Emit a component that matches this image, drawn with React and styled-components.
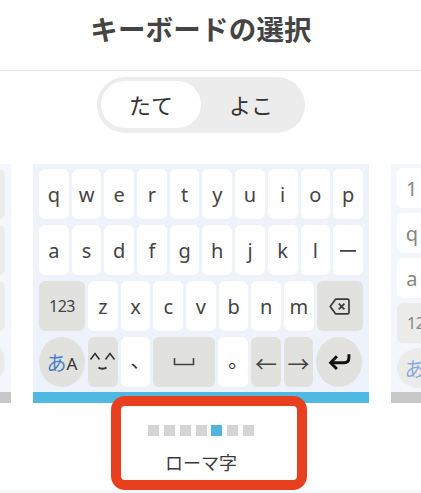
import React from "react";
import styled, { createGlobalStyle } from "styled-components";

const latinRows = ["qwertyuiop".split(""), "asdfghjkl".split("").concat("ー")];
const bottomLetters = "zxcvbnm".split("");
const pagerDots = [0, 1, 2, 3, 4, 5, 6];
const pagerActive = 4;
const numberRows = ["1", "q", "a"];

const SpaceIcon = () => (
  <svg width="22" height="10" viewBox="0 0 22 10" fill="none" stroke="#444" strokeWidth="1.6">
    <path d="M1.5 1v6.5h19V1" />
  </svg>
);

const FaceIcon = () => (
  <svg width="27" height="24" viewBox="0 0 27 24" fill="none" stroke="#333" strokeWidth="1.6">
    <path d="M1.5 9.5 6 3.5l4.5 6" />
    <path d="M16.5 9.5 21 3.5l4.5 6" />
    <path d="M9.5 17.5c2 1.6 6 1.6 8 0" strokeWidth="2" />
  </svg>
);

const BackspaceIcon = () => (
  <svg width="21" height="17" viewBox="0 0 21 17" fill="none" stroke="#3a3a3a" strokeWidth="1.7" strokeLinejoin="round">
    <path d="M6.5 1.2h12a1.5 1.5 0 0 1 1.5 1.5v11.6a1.5 1.5 0 0 1-1.5 1.5h-12L1.2 8.5z" />
    <path d="m9.8 5.6 5.6 5.8m0-5.8-5.6 5.8" />
  </svg>
);

const EnterIcon = () => (
  <svg width="23" height="18" viewBox="0 0 22 17" fill="none" stroke="#111" strokeWidth="2.8">
    <path d="M20 1v3.5c0 3-1.6 4.700-4.500 4.700H3" />
    <path d="M8.500 3 2.500 9.200l6 6" />
  </svg>
);

const App = () => {
  return (
    <Page>
      <GlobalStyle />
      <Header>
        <Title>キーボードの選択</Title>
      </Header>
      <ToggleRow>
        <Toggle>
          <ToggleOption $active>たて</ToggleOption>
          <ToggleOption>よこ</ToggleOption>
        </Toggle>
      </ToggleRow>
      <Track>
        <Panel>
          <Keys $faded>
            <Row $end>
              <Key $wide $tone="gray" />
            </Row>
            <Row $end>
              <Key $wide $tone="gray" />
            </Row>
            <Row $end>
              <Key $wide $tone="gray" />
            </Row>
            <Row $end>
              <Key $wide $round $tone="gray" />
            </Row>
          </Keys>
          <Bar $tone="gray" />
        </Panel>

        <Panel>
          <Keys>
            {latinRows.map((row) => (
              <Row key={row[0]}>
                {row.map((letter) => (
                  <Key key={letter}>{letter}</Key>
                ))}
              </Row>
            ))}
            <Row>
              <Key $wide $tone="gray" $small>
                123
              </Key>
              {bottomLetters.map((letter) => (
                <Key key={letter}>{letter}</Key>
              ))}
              <Key $wide $tone="gray">
                <BackspaceIcon />
              </Key>
            </Row>
            <Row>
              <Key $wide $round $tone="gray">
                <Kana>あ</Kana>
                <KanaLatin>A</KanaLatin>
              </Key>
              <Key $tone="gray">
                <FaceIcon />
              </Key>
              <Key>
                <Punct>、</Punct>
              </Key>
              <Key $tone="gray" $space>
                <SpaceIcon />
              </Key>
              <Key>
                <Punct>。</Punct>
              </Key>
              <Key $tone="gray">
                <Arrow>←</Arrow>
              </Key>
              <Key $tone="gray">
                <Arrow>→</Arrow>
              </Key>
              <Key $wide $round $tone="gray">
                <EnterIcon />
              </Key>
            </Row>
          </Keys>
          <Bar $tone="blue" />
        </Panel>

        <Panel>
          <Keys $faded $compact>
            {numberRows.map((letter) => (
              <Row key={letter}>
                <Key $short>{letter}</Key>
              </Row>
            ))}
            <Row>
              <Key $short $wide $tone="gray" $small>
                123
              </Key>
            </Row>
            <Row>
              <Key $short $wide $round $tone="gray">
                <Kana>あ</Kana>
                <KanaLatin>A</KanaLatin>
              </Key>
            </Row>
          </Keys>
          <Bar $tone="gray" />
        </Panel>
      </Track>
      <Pager>
        <Dots>
          {pagerDots.map((dot) => (
            <Dot key={dot} $active={dot === pagerActive} />
          ))}
        </Dots>
        <PagerLabel>ローマ字</PagerLabel>
        <Highlight />
      </Pager>
      <BottomEdge />
    </Page>
  );
};

export default App;

const GlobalStyle = createGlobalStyle`
  html, body {
    margin: 0;
    padding: 0;
    background: #fff;
    overflow: hidden;
  }
`;

const Page = styled.div`
  width: 421px;
  height: 493px;
  display: flex;
  flex-direction: column;
  overflow: hidden;
  font-family: "Noto Sans CJK JP", "Noto Sans", sans-serif;
  color: #3a3a3a;
`;

const Header = styled.div`
  height: 70px;
  flex-shrink: 0;
  display: flex;
  align-items: center;
  justify-content: center;
  padding-right: 19px;
  border-bottom: 1px solid #e9e9e9;
`;

const Title = styled.div`
  font-size: 27.500px;
  font-weight: 700;
  color: #444;
  letter-spacing: 0.2px;
  margin-top: -14px;
`;

const ToggleRow = styled.div`
  display: flex;
  justify-content: center;
  padding-right: 19px;
  margin-top: 6px;
`;

const Toggle = styled.div`
  width: 208px;
  height: 56px;
  box-sizing: border-box;
  padding: 4px 4px 5px;
  display: flex;
  border-radius: 28px;
  background: #ececec;
`;

const ToggleOption = styled.div`
  width: 100px;
  display: flex;
  align-items: center;
  justify-content: center;
  padding-bottom: 2px;
  border-radius: 24px;
  font-size: 22px;
  color: #333;
  background: ${(p) => (p.$active ? "#fff" : "transparent")};
`;

const Track = styled.div`
  display: flex;
  gap: 22px;
  flex-shrink: 0;
  margin: 31px 0 0 -325px;
`;

const Panel = styled.div`
  width: 336px;
  height: 239px;
  flex-shrink: 0;
  display: flex;
  flex-direction: column;
`;

const Keys = styled.div`
  flex: 1;
  box-sizing: border-box;
  display: flex;
  flex-direction: column;
  gap: ${(p) => (p.$compact ? "5px" : "6px")};
  padding: ${(p) => (p.$compact ? "4px 6px" : "5px 6px")};
  background: #eef2fa;
  opacity: ${(p) => (p.$faded ? 0.65 : 1)};
`;

const Row = styled.div`
  display: flex;
  gap: 3px;
  justify-content: ${(p) => (p.$end ? "flex-end" : "flex-start")};
`;

const keyWidth = (p) => {
  if (p.$wide) return "46px";
  if (p.$space) return "62px";
  return "29.700px";
};

const keyRadius = (p) => {
  if (p.$round) return "50%";
  return "6px";
};

const Key = styled.div`
  width: ${keyWidth};
  height: ${(p) => (p.$short ? "40px" : "50px")};
  flex-shrink: 0;
  display: flex;
  align-items: center;
  justify-content: center;
  border-radius: ${keyRadius};
  background: ${(p) => (p.$tone === "gray" ? "#e1e2de" : "#fff")};
  font-family: "Noto Sans", "Noto Sans CJK JP", sans-serif;
  font-size: ${(p) => (p.$small ? "16px" : "20px")};
  letter-spacing: ${(p) => (p.$small ? "-0.5px" : "0")};
  color: #444;
`;

const Kana = styled.span`
  font-family: "Noto Sans CJK JP", sans-serif;
  font-size: 20px;
  color: #4a7fc9;
`;

const KanaLatin = styled.span`
  font-size: 17px;
  margin-top: 3px;
  color: #333;
`;

const Punct = styled.span`
  font-family: "Noto Sans CJK JP", sans-serif;
  font-size: 20px;
  color: #333;
  transform: translate(5px, -3px);
`;

const Arrow = styled.span`
  font-family: "Noto Sans CJK JP", sans-serif;
  font-size: 22px;
  color: #444;
`;

const Bar = styled.div`
  height: 11px;
  flex-shrink: 0;
  background: ${(p) => (p.$tone === "blue" ? "#4fb9e2" : "#c8c8c8")};
`;

const Pager = styled.div`
  position: relative;
  flex: 1;
  display: flex;
  flex-direction: column;
  align-items: center;
  padding: 22px 19px 0 0;
`;

const Dots = styled.div`
  display: flex;
  gap: 4.700px;
`;

const Dot = styled.div`
  width: 11px;
  height: 11px;
  background: ${(p) => (p.$active ? "#4fb4e0" : "#d4d4d4")};
`;

const PagerLabel = styled.div`
  margin-top: 13px;
  font-size: 18px;
  line-height: 26px;
  color: #3a3a3a;
`;

const Highlight = styled.div`
  position: absolute;
  left: 111px;
  top: -7px;
  width: 196px;
  height: 94px;
  box-sizing: border-box;
  border: 10px solid #e8401f;
  border-radius: 14px;
  pointer-events: none;
`;

const BottomEdge = styled.div`
  height: 3px;
  flex-shrink: 0;
  background: #f6f7f9;
`;
